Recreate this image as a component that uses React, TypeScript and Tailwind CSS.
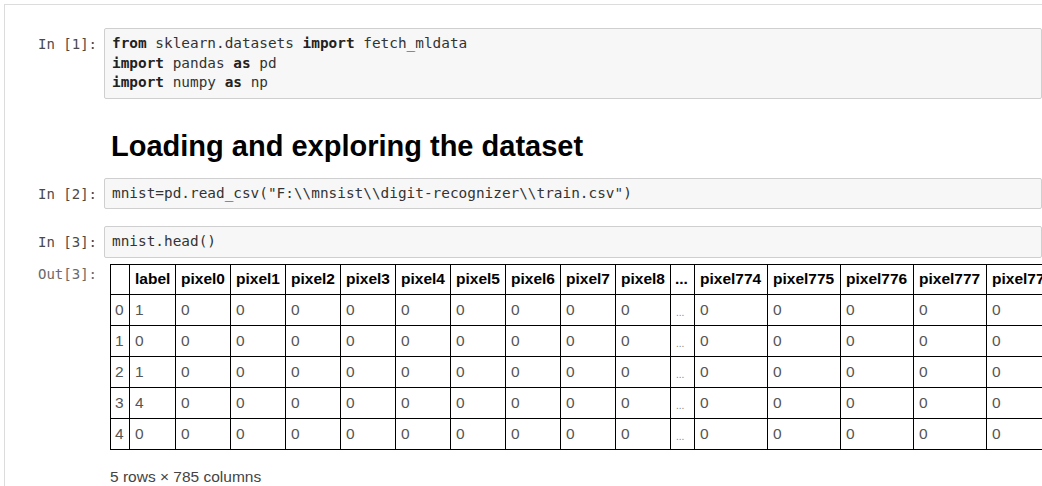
import React from 'react';

const mono = { fontFamily: '"DejaVu Sans Mono", "Liberation Mono", monospace' };

const pixelCols = ['pixel0', 'pixel1', 'pixel2', 'pixel3', 'pixel4', 'pixel5', 'pixel6', 'pixel7', 'pixel8'];
const tailCols = ['pixel774', 'pixel775', 'pixel776', 'pixel777', 'pixel778'];
const labels = [1, 0, 1, 4, 0];

function Prompt({ children, out }: { children: React.ReactNode; out?: boolean }) {
  return (
    <div
      className={`w-[99px] shrink-0 pr-[7px] text-right text-[14px] leading-[20px] ${out ? 'text-[#6a6a6a]' : 'text-[#4a4a4a]'}`}
      style={mono}
    >
      {children}
    </div>
  );
}

function CodeCell({ n, lines, top }: { n: number; lines: React.ReactNode[]; top: string }) {
  return (
    <div className={`flex ${top}`}>
      <Prompt>
        <div className="pt-[6px]">In [{n}]:</div>
      </Prompt>
      <div
        className="flex-1 rounded-[2px] border border-[#cfcfcf] bg-[#f7f7f7] px-[7px] py-[5px] text-[14.4px] leading-[19.5px] text-[#333]"
        style={mono}
      >
        {lines.map((l, i) => (
          <div key={i} className="whitespace-pre">
            {l}
          </div>
        ))}
      </div>
    </div>
  );
}

const kw = (s: string) => <span className="font-bold text-[#222]">{s}</span>;

export default function App() {
  return (
    <div className="h-[486px] w-[1042px] overflow-hidden bg-white" style={{ fontFamily: '"Liberation Sans", Arial, sans-serif' }}>
      <div className="ml-[4px] mt-[4px] h-[482px] border-l border-t border-[#dcdcdc]">
        <CodeCell
          n={1}
          top="mt-[23px]"
          lines={[
            <>
              {kw('from')} sklearn.datasets {kw('import')} fetch_mldata
            </>,
            <>
              {kw('import')} pandas {kw('as')} pd
            </>,
            <>
              {kw('import')} numpy {kw('as')} np
            </>,
          ]}
        />

        {/* markdown heading */}
        <div className="flex">
          <div className="w-[99px] shrink-0" />
          <h1 className="pl-[7px] pt-[29px] pb-[14px] text-[29px] font-bold leading-[36px] text-black">
            Loading and exploring the dataset
          </h1>
        </div>

        <CodeCell n={2} top="" lines={['mnist=pd.read_csv("F:\\\\mnsist\\\\digit-recognizer\\\\train.csv")']} />
        <CodeCell n={3} top="mt-[17px]" lines={['mnist.head()']} />

        {/* output */}
        <div className="mt-[6px] flex">
          <Prompt out>
            <div className="pt-[0px]">Out[3]:</div>
          </Prompt>
          <div className="min-w-0 flex-1 overflow-hidden pl-[6px]">
            <table className="w-[949px] table-fixed border-collapse text-[15.5px] leading-[18px]">
              <colgroup>
                <col className="w-[19px]" />
                <col className="w-[46px]" />
                {pixelCols.map((c) => (
                  <col key={c} className="w-[55px]" />
                ))}
                <col className="w-[24px]" />
                {tailCols.map((c) => (
                  <col key={c} className="w-[73px]" />
                ))}
              </colgroup>
              <thead>
                <tr className="h-[30px]">
                  <th className="border border-black" />
                  <th className="border border-black px-[5px] text-left font-bold text-black">label</th>
                  {pixelCols.map((c) => (
                    <th key={c} className="border border-black px-[5px] text-left font-bold text-black">
                      {c}
                    </th>
                  ))}
                  <th className="border border-black px-[4px] text-left font-bold text-black">...</th>
                  {tailCols.map((c) => (
                    <th key={c} className="whitespace-nowrap border border-black px-[5px] text-left font-bold text-black">
                      {c}
                    </th>
                  ))}
                </tr>
              </thead>
              <tbody>
                {labels.map((lab, i) => (
                  <tr key={i} className="h-[31px] text-[#555]">
                    <td className="border border-black px-[4px] text-left">{i}</td>
                    <td className="border border-black px-[5px] text-left">{lab}</td>
                    {pixelCols.map((c) => (
                      <td key={c} className="border border-black px-[5px] text-left">
                        0
                      </td>
                    ))}
                    <td className="border border-black px-[5px] pt-[6px] text-left text-[10px] text-[#888]">...</td>
                    {tailCols.map((c) => (
                      <td key={c} className="border border-black px-[5px] text-left">
                        0
                      </td>
                    ))}
                  </tr>
                ))}
              </tbody>
            </table>
            <div className="mt-[15px] text-[15.5px] text-[#444]">5 rows × 785 columns</div>
          </div>
        </div>
      </div>
    </div>
  );
}
